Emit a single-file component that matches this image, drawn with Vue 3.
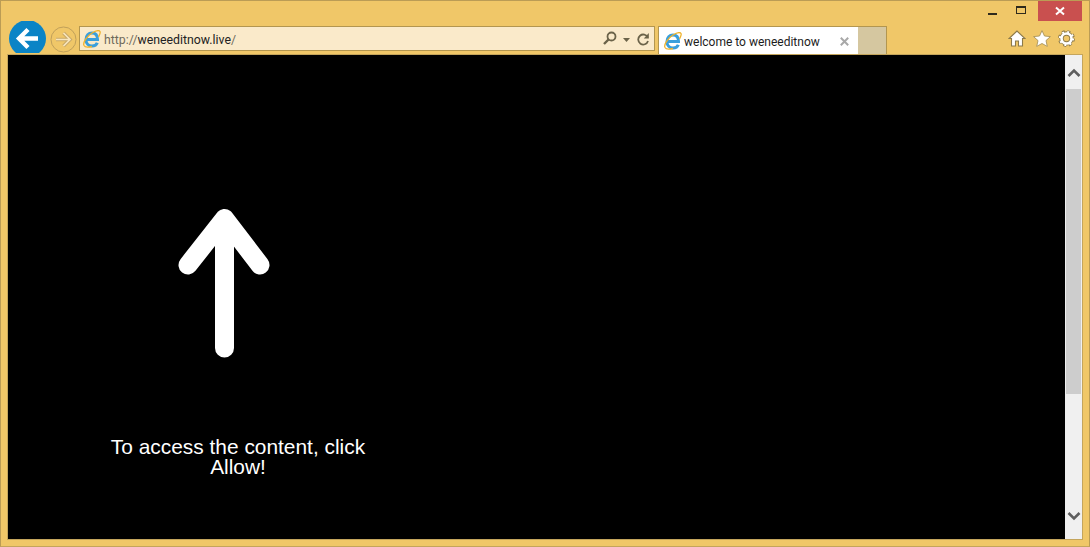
<script setup>
const url = { scheme: 'http://', host: 'weneeditnow.live', tail: '/' }
const tabTitle = 'welcome to weneeditnow'
const message = 'To access the content, click Allow!'
</script>

<template>
  <div class="window">
    <div class="caption">
      <button class="cap min" aria-label="Minimize"><span class="min-bar"></span></button>
      <button class="cap max" aria-label="Maximize"><span class="max-box"></span></button>
      <button class="cap close" aria-label="Close">
        <svg width="10" height="10" viewBox="0 0 10 10"><path d="M1 1.5 9 8.5M9 1.5 1 8.5" stroke="#fff" stroke-width="2" fill="none"/></svg>
      </button>
    </div>

    <div class="toolbar">
      <div class="back">
        <svg width="37" height="37" viewBox="0 0 37 37">
          <circle cx="18.5" cy="18.5" r="18.5" fill="#0a84c6"/>
          <path d="M19 9.500 10 18.500l9 9M10.500 18.500H29" stroke="#fff" stroke-width="4.400" fill="none"/>
        </svg>
      </div>
      <div class="forward">
        <svg width="27" height="27" viewBox="0 0 27 27">
          <circle cx="13.5" cy="13.5" r="12.5" fill="none" stroke="#c0a05a" stroke-width="1"/>
          <path d="M13.500 7l6.500 6.500-6.500 6.500M19 13.500H6" stroke="#c8a968" stroke-width="3.600" fill="none"/>
          <path d="M13.500 7l6.500 6.500-6.500 6.500M19 13.500H6" stroke="#f8e6bd" stroke-width="1.600" fill="none"/>
        </svg>
      </div>

      <div class="address">
        <svg class="ie" width="18" height="18" viewBox="0 0 18 18">
          <path d="M4.500 9.500h10C14.500 5.500 12.500 3 9 3S3 5.500 3 9.500s2.500 6.500 6 6.500c2.500 0 4.500-1 5.300-3.200" fill="none" stroke="#3a9fdc" stroke-width="3"/>
          <path d="M1 15.500C-.5 13 4 6 9 3c4-2.400 7-3 8-1.500.8 1.200-.3 3.200-1.500 5.500" fill="none" stroke="#efb22a" stroke-width="1.300"/>
          <path d="M1 15.500c1 2 5 1.800 8 1" fill="none" stroke="#efb22a" stroke-width="1.300"/>
        </svg>
        <span class="url"><span class="dim">{{ url.scheme }}</span>{{ url.host }}<span class="dim">{{ url.tail }}</span></span>
        <span class="addr-tools">
          <svg width="15" height="15" viewBox="0 0 15 15"><circle cx="8.500" cy="5.500" r="4" fill="none" stroke="#6b6349" stroke-width="1.800"/><path d="M5.500 8.500 1 13" stroke="#6b6349" stroke-width="2.400"/></svg>
          <svg class="caret" width="7" height="4" viewBox="0 0 7 4"><path d="M0 0h7L3.500 4z" fill="#6b6349"/></svg>
          <svg width="13" height="14" viewBox="0 0 13 14"><path d="M10.800 5.500A5 5 0 1 0 11 9" fill="none" stroke="#6b6349" stroke-width="1.800"/><path d="M11.800 1v5.500H6.800z" fill="#6b6349"/></svg>
        </span>
      </div>

      <div class="tab">
        <svg class="ie" width="18" height="18" viewBox="0 0 18 18">
          <path d="M4.500 9.500h10C14.500 5.500 12.500 3 9 3S3 5.500 3 9.500s2.500 6.500 6 6.500c2.500 0 4.500-1 5.300-3.200" fill="none" stroke="#3a9fdc" stroke-width="3"/>
          <path d="M1 15.500C-.5 13 4 6 9 3c4-2.400 7-3 8-1.500.8 1.200-.3 3.200-1.500 5.500" fill="none" stroke="#efb22a" stroke-width="1.300"/>
          <path d="M1 15.500c1 2 5 1.800 8 1" fill="none" stroke="#efb22a" stroke-width="1.300"/>
        </svg>
        <span class="tab-title">{{ tabTitle }}</span>
        <svg class="tab-x" width="9" height="9" viewBox="0 0 9 9"><path d="M.8.8l7.400 7.400M8.200.8.800 8.200" stroke="#a8a8a8" stroke-width="2" fill="none"/></svg>
      </div>
      <div class="new-tab"></div>

      <div class="tools">
        <svg width="18" height="17" viewBox="0 0 18 17"><path d="M9 1 1 8.500h2.500v7.500h4v-5h3v5h4V8.500H17z" fill="#fff" stroke="#8c7a4a" stroke-width="1.100"/></svg>
        <svg width="18" height="17" viewBox="0 0 18 17"><path d="M9 .6l2.500 5.400 5.900.6-4.400 4 1.300 5.800L9 13.500l-5.300 2.900L5 10.600.6 6.600l5.900-.6z" fill="#fff" stroke="#a8935a" stroke-width=".9"/></svg>
        <svg width="17" height="17" viewBox="0 0 17 17">
          <circle cx="8.500" cy="8.500" r="5" fill="none" stroke="#8c7a4a" stroke-width="4.400"/>
          <circle cx="8.500" cy="8.500" r="6.400" fill="none" stroke="#8c7a4a" stroke-width="4" stroke-dasharray="2.600 2.430"/>
          <circle cx="8.500" cy="8.500" r="5" fill="none" stroke="#fff" stroke-width="2.600"/>
          <circle cx="8.500" cy="8.500" r="6.400" fill="none" stroke="#fff" stroke-width="2.400" stroke-dasharray="1.800 3.230"/>
        </svg>
      </div>
    </div>

    <div class="body">
      <main class="page">
        <div class="prompt">
          <svg class="arrow" width="92" height="151" viewBox="0 0 92 151">
            <path d="M46.500 141V11.500M10 58 46.500 11.500 82 58" fill="none" stroke="#fff" stroke-width="19" stroke-linecap="round" stroke-linejoin="round"/>
          </svg>
          <p class="message">{{ message }}</p>
        </div>
      </main>
      <aside class="scrollbar">
        <svg width="14" height="10" viewBox="0 0 14 10"><path d="M1.500 8 7 2.500 12.500 8" fill="none" stroke="#5f5f5f" stroke-width="2.600"/></svg>
        <div class="track"><div class="thumb"></div></div>
        <svg width="14" height="10" viewBox="0 0 14 10"><path d="M1.500 2 7 7.500 12.500 2" fill="none" stroke="#5f5f5f" stroke-width="2.600"/></svg>
      </aside>
    </div>
  </div>
</template>

<style>
html, body { margin: 0; overflow: hidden; }
</style>

<style scoped>
.window {
  box-sizing: border-box;
  width: 1090px;
  height: 547px;
  display: flex;
  flex-direction: column;
  background: #f0c768;
  border: 1px solid #bb9c55;
  border-bottom-color: #c4a55c;
  font-family: Roboto, "Open Sans", sans-serif;
}

.caption {
  height: 20px;
  display: flex;
  justify-content: flex-end;
  padding-right: 7px;
}
.cap {
  border: 0;
  padding: 0;
  background: none;
  display: flex;
  align-items: center;
  justify-content: center;
}
.min { width: 26px; margin-right: 3px; }
.min-bar { width: 9px; height: 2px; margin-top: 6px; background: #2f2a1c; }
.max { width: 26px; margin-right: 4px; }
.max-box {
  box-sizing: border-box;
  width: 10px;
  height: 8px;
  margin-bottom: 2px;
  border: 1px solid #2f2a1c;
  border-top-width: 2px;
}
.close { width: 44px; background: #c9504f; }

.toolbar {
  height: 33px;
  display: flex;
  align-items: flex-start;
  overflow: hidden;
  padding-left: 8px;
}
.back { height: 33px; margin-top: -1px; overflow: hidden; flex: none; }
.back svg, .forward svg { display: block; }
.forward { margin: 5px 0 0 4px; flex: none; }

.address {
  box-sizing: border-box;
  width: 576px;
  height: 25px;
  margin: 5px 0 0 2px;
  padding: 0 4px 0 3px;
  display: flex;
  align-items: center;
  flex: none;
  background: #faeaca;
  border: 1px solid #b3964f;
}
.url { margin: 2px 0 0 3px; font-size: 12.3px; color: #222; }
.dim { color: #6f6a5c; }
.addr-tools {
  margin-left: auto;
  display: flex;
  align-items: center;
  gap: 5px;
}
.caret { margin: 2px 2px 0 0; }

.tab {
  box-sizing: border-box;
  width: 200px;
  height: 28px;
  margin: 5px 0 0 3px;
  padding: 1px 9px 0 5px;
  display: flex;
  align-items: center;
  flex: none;
  background: #fff;
  border: 1px solid #b3964f;
  border-bottom: 0;
  border-right: 0;
}
.tab-title { margin: 2px 0 0 2px; font-size: 12px; color: #1c1c1c; }
.tab-x { margin-left: auto; }
.new-tab {
  box-sizing: border-box;
  width: 29px;
  height: 28px;
  margin-top: 5px;
  flex: none;
  background: #d5c7a0;
  border: 1px solid #b3964f;
  border-bottom: 0;
  border-left: 0;
}
.tools {
  margin: 9px 14px 0 auto;
  display: flex;
  gap: 7px;
}

.body {
  flex: 1;
  min-height: 0;
  margin: 0 6px 6px 6px;
  display: flex;
  border: 1px solid #c4a55c;
}
.page { flex: 1; background: #000; padding-left: 90px; }
.prompt {
  width: 280px;
  display: flex;
  flex-direction: column;
  padding-top: 152px;
}
.arrow { display: block; margin-left: 80px; }
.message {
  margin: 79px 0 0;
  font-family: "Liberation Sans", Arial, sans-serif;
  font-size: 20.9px;
  line-height: 20px;
  text-align: center;
  color: #fff;
}

.scrollbar {
  width: 17px;
  display: flex;
  flex-direction: column;
  align-items: center;
  background: #f0f0f0;
}
.scrollbar svg { flex: none; margin: 13px 0 11px; display: block; }
.scrollbar svg:last-child { margin: 0 0 18px; }
.track { flex: 1; width: 15px; }
.thumb { height: 305px; background: #cdcdcd; }
</style>
